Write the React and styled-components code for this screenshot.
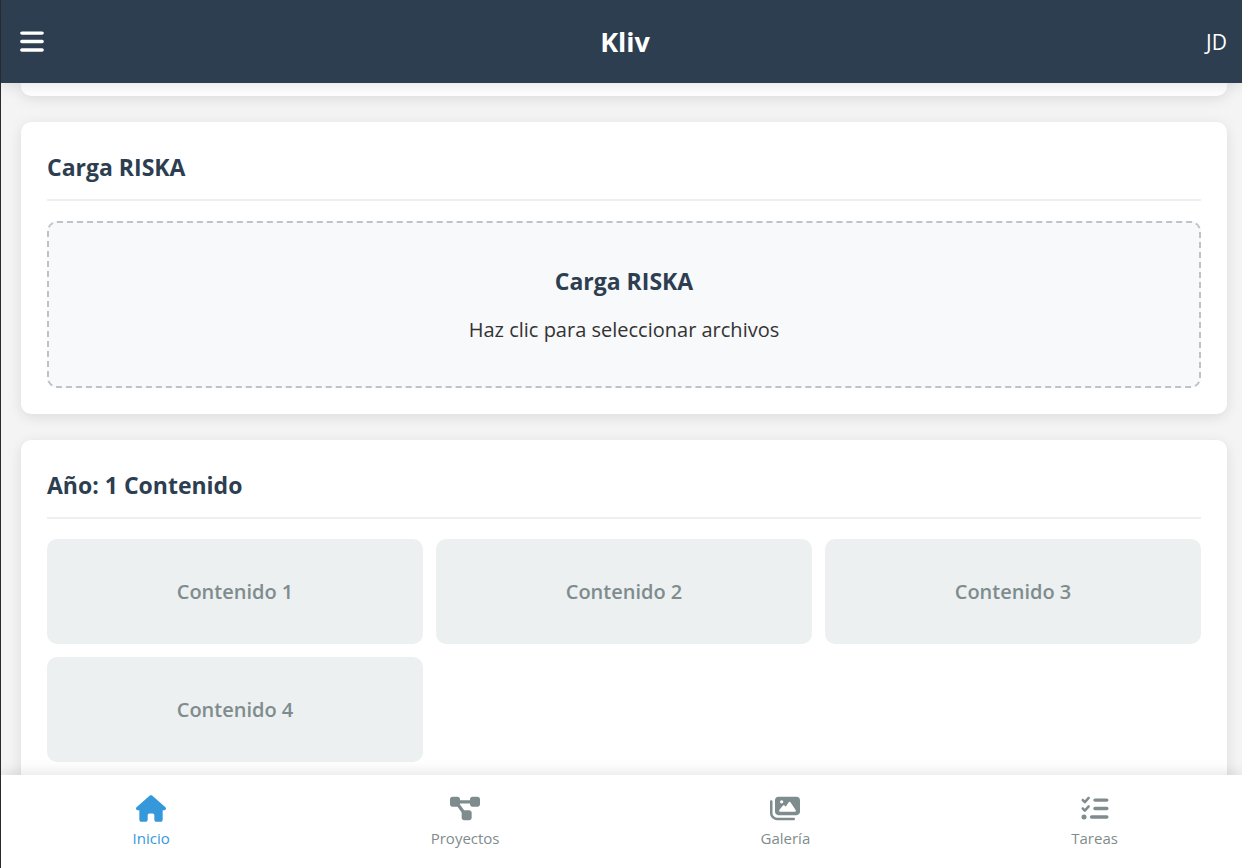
import React from "react";
import styled, { createGlobalStyle } from "styled-components";
import { FaBars, FaHouse, FaDiagramProject, FaImages, FaListCheck } from "react-icons/fa6";

const GlobalStyle = createGlobalStyle`
  *, *::before, *::after { box-sizing: border-box; }
  body {
    margin: 0;
    background: #f4f4f4;
    color: #333;
    font-family: "Segoe UI", "Open Sans", "Noto Sans", sans-serif;
    font-size: 20px;
  }
  button { font-family: inherit; border: 0; cursor: pointer; }
  h1, h2, h3, p { margin: 0; }
`;

const Shell = styled.div`
  display: flex;
  flex-direction: column;
  height: 100vh;
  border-left: 1px solid #2b2c30;
`;

const Header = styled.header`
  position: relative;
  z-index: 2;
  flex: none;
  display: flex;
  align-items: center;
  justify-content: space-between;
  padding: 21px 15px 20px 19px;
  min-height: 83px;
  background: #2c3e50;
  color: #fff;
  box-shadow: 0 3px 13px rgba(0, 0, 0, 0.1);
`;

const MenuButton = styled.button`
  display: flex;
  padding: 0 0 2px;
  background: none;
  color: inherit;

  svg { width: 24px; height: 27px; }
`;

const Brand = styled.h1`
  font-size: 27px;
  line-height: 42px;
  font-weight: 700;
`;

const UserInitials = styled.span`
  font-size: 21px;
  line-height: 28px;
`;

const Content = styled.main`
  flex: 1;
  min-height: 0;
  overflow: hidden;
  display: flex;
  flex-direction: column;
  gap: 26px;
  padding: 0 15px 0 20px;
`;

const Card = styled.section`
  flex: none;
  padding: 26px;
  background: #fff;
  border-radius: 10px;
  box-shadow: 0 3px 13px rgba(0, 0, 0, 0.1);
`;

const CardEnd = styled(Card)`
  padding: 13px 0 0;
  border-radius: 0 0 10px 10px;
`;

const CardTitle = styled.h2`
  margin-bottom: 20px;
  padding-bottom: 13px;
  border-bottom: 2px solid #ecf0f1;
  color: #2c3e50;
  font-size: 23px;
  line-height: 38px;
  font-weight: 700;
`;

const UploadArea = styled.button`
  display: flex;
  flex-direction: column;
  align-items: center;
  gap: 13px;
  width: 100%;
  padding: 39px 26px;
  border: 2px dashed #bdc3c7;
  border-radius: 10px;
  background: #f8f9fb;
  color: #333;
`;

const UploadTitle = styled.span`
  color: #2c3e50;
  font-size: 23px;
  line-height: 38px;
  font-weight: 700;
`;

const UploadHint = styled.span`
  font-size: 20px;
  line-height: 34px;
`;

const TileGrid = styled.div`
  display: grid;
  grid-template-columns: repeat(3, 1fr);
  gap: 13px;
`;

const Tile = styled.button`
  min-height: 105px;
  border-radius: 10px;
  background: #ecf0f1;
  color: #7f8c8d;
  font-size: 20px;
  font-weight: 600;
`;

const BottomNav = styled.nav`
  position: relative;
  z-index: 2;
  flex: none;
  display: flex;
  justify-content: space-between;
  padding: 20px 10% 16px 10.6%;
  background: #fff;
  box-shadow: 0 -3px 13px rgba(0, 0, 0, 0.1);
`;

const NavLink = styled.a`
  display: flex;
  flex-direction: column;
  align-items: center;
  gap: 3px;
  color: ${({ $active }) => ($active ? "#3498db" : "#7f8c8d")};
  font-size: 15px;
  line-height: 27px;
  text-decoration: none;

  svg { width: 30px; height: 27px; }
`;

const tiles = ["Contenido 1", "Contenido 2", "Contenido 3", "Contenido 4"];

const links = [
  { label: "Inicio", Icon: FaHouse },
  { label: "Proyectos", Icon: FaDiagramProject },
  { label: "Galería", Icon: FaImages },
  { label: "Tareas", Icon: FaListCheck },
];

export default function App() {
  return (
    <>
      <GlobalStyle />
      <Shell>
        <Header>
          <MenuButton type="button" aria-label="Menú"><FaBars /></MenuButton>
          <Brand>Kliv</Brand>
          <UserInitials>JD</UserInitials>
        </Header>
        <Content>
          <CardEnd />
          <Card>
            <CardTitle>Carga RISKA</CardTitle>
            <UploadArea type="button">
              <UploadTitle>Carga RISKA</UploadTitle>
              <UploadHint>Haz clic para seleccionar archivos</UploadHint>
            </UploadArea>
          </Card>
          <Card>
            <CardTitle>Año: 1 Contenido</CardTitle>
            <TileGrid>
              {tiles.map((name) => <Tile type="button" key={name}>{name}</Tile>)}
            </TileGrid>
          </Card>
        </Content>
        <BottomNav>
          {links.map(({ label, Icon }, i) => (
            <NavLink href="#" key={label} $active={i === 0}>
              <Icon />
              {label}
            </NavLink>
          ))}
        </BottomNav>
      </Shell>
    </>
  );
}
